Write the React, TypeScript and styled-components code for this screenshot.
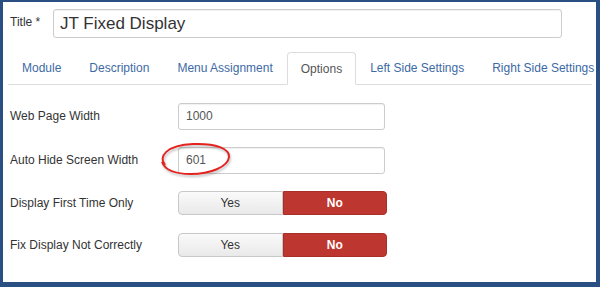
import React from 'react'
import styled, { createGlobalStyle } from 'styled-components'

const GlobalStyle = createGlobalStyle`
  html, body {
    margin: 0;
    padding: 0;
    background: #ffffff;
  }
  body {
    font-family: 'Liberation Sans', Arial, sans-serif;
  }
`

const Frame = styled.div`
  box-sizing: border-box;
  width: 600px;
  height: 287px;
  border-style: solid;
  border-color: #2a5083;
  border-width: 2px 4px 5px 3px;
  background: #ffffff;
  padding: 7px 0 0 0;
  overflow: hidden;
`

const TitleRow = styled.div`
  display: flex;
  align-items: center;
  padding-left: 7px;
`

const TitleLabel = styled.label`
  width: 43px;
  font-size: 12px;
  color: #333333;
  margin-top: -3px;
`

const TitleInput = styled.div`
  box-sizing: border-box;
  width: 509px;
  height: 29px;
  border: 1px solid #cccccc;
  border-radius: 3px;
  box-shadow: inset 0 1px 1px rgba(0, 0, 0, 0.06);
  display: flex;
  align-items: center;
  padding-left: 6px;
  font-size: 17px;
  color: #333333;
`

const TabBar = styled.div`
  display: flex;
  margin: 14px 0 0 5px;
  width: 584px;
  height: 32px;
  border-bottom: 1px solid #dddddd;
`

const Tab = styled.div<{ $active?: boolean }>`
  box-sizing: border-box;
  height: ${({ $active }) => ($active ? '33px' : '32px')};
  padding: 0 13px;
  display: flex;
  align-items: center;
  font-size: 12px;
  white-space: nowrap;
  color: ${({ $active }) => ($active ? '#555555' : '#3d6aa5')};
  background: #ffffff;
  border: 1px solid ${({ $active }) => ($active ? '#dddddd' : 'transparent')};
  border-bottom-color: ${({ $active }) => ($active ? '#ffffff' : 'transparent')};
  border-radius: 4px 4px 0 0;
`

const Form = styled.div`
  display: flex;
  flex-direction: column;
  padding: 9px 0 0 7px;
`

const Row = styled.div<{ $h: number }>`
  display: flex;
  align-items: center;
  height: ${({ $h }) => $h}px;
  position: relative;
`

const FieldLabel = styled.label`
  width: 168px;
  font-size: 12px;
  color: #333333;
`

const TextInput = styled.div`
  box-sizing: border-box;
  width: 207px;
  height: 27px;
  border: 1px solid #cccccc;
  border-radius: 3px;
  box-shadow: inset 0 1px 1px rgba(0, 0, 0, 0.06);
  display: flex;
  align-items: center;
  padding-left: 7px;
  font-size: 12px;
  color: #555555;
`

const Toggle = styled.div`
  display: flex;
  width: 209px;
  height: 24px;
`

const ToggleHalf = styled.div<{ $on?: boolean }>`
  box-sizing: border-box;
  flex: 1;
  display: flex;
  align-items: center;
  justify-content: center;
  font-size: 12px;
  font-weight: ${({ $on }) => ($on ? 'bold' : 'normal')};
  color: ${({ $on }) => ($on ? '#ffffff' : '#333333')};
  background: ${({ $on }) => ($on ? '#bd362f' : 'linear-gradient(#fafafa, #e9e9e9)')};
  border: 1px solid ${({ $on }) => ($on ? '#a9302a' : '#c8c8c8')};
  border-radius: ${({ $on }) => ($on ? '0 4px 4px 0' : '4px 0 0 4px')};
`

const Circle = styled.svg`
  position: absolute;
  left: 147px;
  top: 4px;
  overflow: visible;
  filter: drop-shadow(1px 2px 1px rgba(0, 0, 0, 0.25));
`

const fields = [
  { label: 'Web Page Width', value: '1000' },
  { label: 'Auto Hide Screen Width', value: '601', marked: true },
]

const toggles = ['Display First Time Only', 'Fix Display Not Correctly']

const tabs = [
  'Module',
  'Description',
  'Menu Assignment',
  'Options',
  'Left Side Settings',
  'Right Side Settings',
]

const App: React.FC = () => {
  return (
    <Frame>
      <GlobalStyle />
      <TitleRow>
        <TitleLabel>Title *</TitleLabel>
        <TitleInput>JT Fixed Display</TitleInput>
      </TitleRow>
      <TabBar>
        {tabs.map((t) => (
          <Tab key={t} $active={t === 'Options'}>
            {t}
          </Tab>
        ))}
      </TabBar>
      <Form>
        {fields.map((f) => (
          <Row key={f.label} $h={44}>
            <FieldLabel>{f.label}</FieldLabel>
            <TextInput>{f.value}</TextInput>
            {f.marked && (
              <Circle width="76" height="34" viewBox="0 0 76 34">
                <path
                  d="M8 23 C1 15 9 3 36 2 C59 1 73 7 72 15 C71 25 53 32 34 32 C17 32 8 28 5 20"
                  fill="none"
                  stroke="#e3231f"
                  strokeWidth="2"
                />
              </Circle>
            )}
          </Row>
        ))}
        {toggles.map((label) => (
          <Row key={label} $h={42}>
            <FieldLabel>{label}</FieldLabel>
            <Toggle>
              <ToggleHalf>Yes</ToggleHalf>
              <ToggleHalf $on>No</ToggleHalf>
            </Toggle>
          </Row>
        ))}
      </Form>
    </Frame>
  )
}

export default App
